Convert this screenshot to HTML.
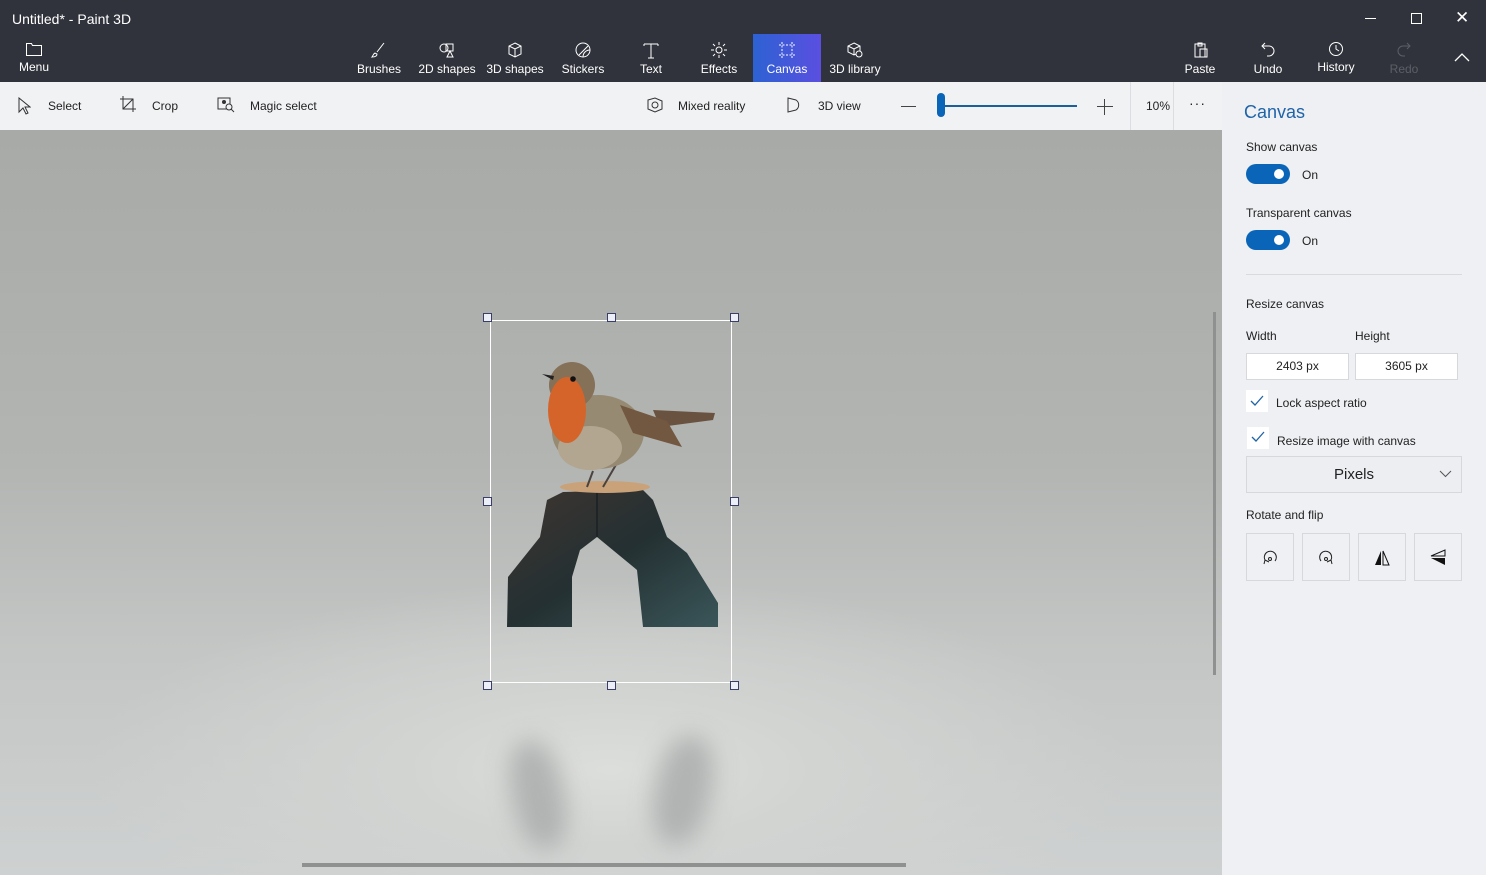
<!DOCTYPE html>
<html><head><meta charset="utf-8"><style>
*{margin:0;padding:0;box-sizing:border-box}
body{width:1486px;height:875px;overflow:hidden;font-family:"Liberation Sans",sans-serif;background:#2f323a;position:relative}
.abs{position:absolute}
.top{left:0;top:0;width:1486px;height:82px;background:#30333b;color:#fff}
.t{font-size:12px;color:#fff;white-space:nowrap}
.tb{position:absolute;top:34px;height:48px;text-align:center;color:#fff;font-size:12px}
.tb svg{position:absolute;left:50%;margin-left:-9px;top:7px}
.tb span{position:absolute;left:-10px;right:-10px;top:28px;text-align:center;white-space:nowrap}
.bar{left:0;top:82px;width:1222px;height:48px;background:#f1f2f4}
.bar .t{color:#222;font-size:12px}
.canvas{left:0;top:130px;width:1222px;height:745px;background:
radial-gradient(ellipse 520px 190px at 610px 640px,#dcdedb 0%,#d2d4d2 40%,rgba(200,202,201,0) 100%),
linear-gradient(180deg,#a8aaa8 0%,#b3b5b3 45%,#c4c6c5 70%,#ced1d1 100%)}
.panel{left:1222px;top:82px;width:264px;height:793px;background:#eef0f3}
.p{font-size:12px;color:#222;position:absolute;white-space:nowrap}
.tog{position:absolute;width:44px;height:20px;border-radius:10px;background:#0a64b8}
.tog:after{content:"";position:absolute;right:6px;top:5px;width:10px;height:10px;border-radius:50%;background:#fff}
.box{position:absolute;background:#fff;border:1px solid #d6d8dc;font-size:12px;color:#222;text-align:center}
.h{position:absolute;width:9px;height:9px;border:1px solid #3a3f6a;background:#eceef8}
</style></head><body>
<div class="abs top">
 <div class="abs t" style="left:12px;top:11px;font-size:14px">Untitled* - Paint 3D</div>
 <div class="abs" style="left:1365px;top:18px;width:11px;height:1px;background:#fff"></div>
 <div class="abs" style="left:1411px;top:13px;width:11px;height:11px;border:1px solid #fff"></div>
 <div class="abs t" style="left:1455px;top:8px;font-size:17px">✕</div>
 <div class="tb" style="left:12px;width:44px"><svg width="18" height="16" viewBox="0 0 18 16"><path d="M1.5 2.5h5l1 2h9v10h-15z" fill="none" stroke="#fff"/></svg><span style="top:26px">Menu</span></div>
 <div class="tb" style="left:353px;width:52px"><svg width="18" height="18" viewBox="0 0 18 18"><path d="M14 2l-7 9M5 12c-2 1-2 3-3 4 3 0 5-1 5-3z" fill="none" stroke="#fff"/></svg><span>Brushes</span></div>
 <div class="tb" style="left:418px;width:58px"><svg width="18" height="18" viewBox="0 0 18 18"><circle cx="6" cy="7" r="4" fill="none" stroke="#fff"/><path d="M8 3h7v7h-7zM9 16l3-6 3 6z" fill="none" stroke="#fff"/></svg><span>2D shapes</span></div>
 <div class="tb" style="left:486px;width:58px"><svg width="18" height="18" viewBox="0 0 18 18"><path d="M9 2l6 3v8l-6 3-6-3V5zM3 5l6 3 6-3M9 8v8" fill="none" stroke="#fff"/></svg><span>3D shapes</span></div>
 <div class="tb" style="left:558px;width:50px"><svg width="18" height="18" viewBox="0 0 18 18"><circle cx="9" cy="9" r="7" fill="none" stroke="#fff"/><path d="M5 14l9-9M9 16c0-4 3-7 7-7" fill="none" stroke="#fff"/></svg><span>Stickers</span></div>
 <div class="tb" style="left:630px;width:42px"><svg width="18" height="18" viewBox="0 0 18 18"><path d="M2 3h14M9 3v14M2 3v2M16 3v2M6 17h6" fill="none" stroke="#fff"/></svg><span>Text</span></div>
 <div class="tb" style="left:697px;width:44px"><svg width="18" height="18" viewBox="0 0 18 18"><circle cx="9" cy="9" r="3" fill="none" stroke="#fff"/><path d="M9 1v3M9 14v3M1 9h3M14 9h3M3 3l2 2M13 13l2 2M3 15l2-2M13 5l2-2" stroke="#fff"/></svg><span>Effects</span></div>
 <div class="tb" style="left:753px;width:68px;background:linear-gradient(90deg,#2d62d3,#5a4fe0)"><svg width="18" height="18" viewBox="0 0 18 18"><path d="M4 1v16M14 1v16M1 4h16M1 14h16" stroke="#fff" stroke-dasharray="2 1.5"/></svg><span>Canvas</span></div>
 <div class="tb" style="left:827px;width:56px"><svg width="18" height="18" viewBox="0 0 18 18"><path d="M8 2l6 3v6l-6 3-6-3V5zM2 5l6 3 6-3M8 8v6" fill="none" stroke="#fff"/><circle cx="13" cy="13" r="3" fill="#30333b" stroke="#fff"/></svg><span>3D library</span></div>
 <div class="tb" style="left:1180px;width:40px"><svg width="18" height="18" viewBox="0 0 18 18"><path d="M4 3h10v13H4zM7 2h4v3H7zM9 8h7v8H9z" fill="none" stroke="#fff"/></svg><span>Paste</span></div>
 <div class="tb" style="left:1248px;width:40px"><svg width="18" height="18" viewBox="0 0 18 18"><path d="M6 2L3 5l3 3M3 5h7a5 5 0 010 10H8" fill="none" stroke="#fff"/></svg><span>Undo</span></div>
 <div class="tb" style="left:1312px;width:48px"><svg width="18" height="18" viewBox="0 0 18 18" style="top:6px"><circle cx="9" cy="9" r="6.5" fill="none" stroke="#fff"/><path d="M9 5v4l3 2" fill="none" stroke="#fff"/></svg><span style="top:26px">History</span></div>
 <div class="tb" style="left:1384px;width:40px;color:#5c5f66"><svg width="18" height="18" viewBox="0 0 18 18"><path d="M12 2l3 3-3 3M15 5H8a5 5 0 000 10h2" fill="none" stroke="#5c5f66"/></svg><span>Redo</span></div>
 <svg class="abs" style="left:1454px;top:52px" width="16" height="10"><path d="M1 9l7-7 7 7" fill="none" stroke="#fff" stroke-width="1.3"/></svg>
</div>
<div class="abs bar">
 <svg class="abs" style="left:17px;top:15px" width="14" height="18"><path d="M2 1v14l4-4 3 6 2-1-3-6h5z" fill="none" stroke="#333"/></svg>
 <div class="abs t" style="left:48px;top:17px">Select</div>
 <svg class="abs" style="left:119px;top:13px" width="18" height="18"><path d="M4 1v13h13M1 4h13v13M14 4L4 14" fill="none" stroke="#333"/></svg>
 <div class="abs t" style="left:152px;top:17px">Crop</div>
 <svg class="abs" style="left:217px;top:15px" width="18" height="16"><rect x="1" y="1" width="12" height="11" fill="none" stroke="#333"/><circle cx="7" cy="5" r="2" fill="#333"/><circle cx="12" cy="10" r="3" fill="#f1f2f4" stroke="#333"/><path d="M14 12l3 3" stroke="#333"/></svg>
 <div class="abs t" style="left:250px;top:17px">Magic select</div>
 <svg class="abs" style="left:646px;top:14px" width="18" height="18"><path d="M2 4l7-2 7 3v8l-7 3-7-3z" fill="none" stroke="#333"/><circle cx="9" cy="9" r="3" fill="none" stroke="#333"/></svg>
 <div class="abs t" style="left:678px;top:17px">Mixed reality</div>
 <svg class="abs" style="left:786px;top:14px" width="18" height="18"><path d="M2 2l8 2a6 6 0 010 10l-8 2z" fill="none" stroke="#333"/></svg>
 <div class="abs t" style="left:818px;top:17px">3D view</div>
 <div class="abs" style="left:901px;top:24px;width:15px;height:1px;background:#444"></div>
 <div class="abs" style="left:940px;top:23px;width:137px;height:2px;background:#1d5f9a"></div>
 <div class="abs" style="left:937px;top:11px;width:8px;height:24px;border-radius:4px;background:#0a64b8"></div>
 <div class="abs" style="left:1097px;top:24px;width:16px;height:1px;background:#444"></div>
 <div class="abs" style="left:1104px;top:17px;width:1px;height:16px;background:#444"></div>
 <div class="abs" style="left:1130px;top:0;width:44px;height:48px;border-left:1px solid #dcdde0;border-right:1px solid #dcdde0"></div>
 <div class="abs t" style="left:1146px;top:17px">10%</div>
 <div class="abs t" style="left:1189px;top:13px;font-size:14px;letter-spacing:1px">···</div>
</div>
<div class="abs canvas">
 <div class="abs" style="left:512px;top:610px;width:52px;height:110px;border-radius:45%;background:#a4a7a6;filter:blur(12px);opacity:.75;transform:rotate(-12deg)"></div>
 <div class="abs" style="left:655px;top:605px;width:56px;height:110px;border-radius:45%;background:#a4a7a6;filter:blur(12px);opacity:.75;transform:rotate(12deg)"></div>
 <div class="abs" style="left:302px;top:733px;width:604px;height:4px;background:#8f9090"></div>
 <div class="abs" style="left:1213px;top:182px;width:3px;height:363px;background:#8f9090"></div>
</div>
<svg class="abs" style="left:0;top:0" width="1222" height="875">
 <defs><linearGradient id="rk" x1="0" y1="0" x2="1" y2="1"><stop offset="0" stop-color="#3f3530"/><stop offset=".5" stop-color="#243032"/><stop offset="1" stop-color="#3a5659"/></linearGradient></defs>
 <rect x="490.5" y="320.5" width="241" height="362" fill="none" stroke="#fff"/>
 <path d="M507 627L508 577 540 537 547 500 563 492 643 490 653 500 667 537 687 553 718 603 718 627 643 627 637 570 597 537 580 550 572 577 572 627z" fill="url(#rk)"/>
 <path d="M597 492 L597 537" stroke="#1f2526" stroke-width="2"/>
 <ellipse cx="605" cy="487" rx="45" ry="6" fill="#c9a27a"/>
 <path d="M593 471l-6 16M617 463l-14 24" stroke="#4a4340" stroke-width="2"/>
 <path d="M653 410L715 413 713 420 660 427z" fill="#6a5240"/>
 <ellipse cx="598" cy="432" rx="46" ry="37" fill="#978a72"/>
 <ellipse cx="590" cy="448" rx="32" ry="22" fill="#b2a690"/>
 <circle cx="572" cy="385" r="23" fill="#857058"/>
 <ellipse cx="567" cy="410" rx="19" ry="33" fill="#d4642a"/>
 <path d="M620 405L667 421 682 447 633 433z" fill="#735841"/>
 <path d="M542 374l12 2-1 4z" fill="#222"/>
 <circle cx="573" cy="379" r="2.8" fill="#111"/>
</svg>
<div class="h" style="left:483px;top:313px"></div><div class="h" style="left:607px;top:313px"></div><div class="h" style="left:730px;top:313px"></div>
<div class="h" style="left:483px;top:497px"></div><div class="h" style="left:730px;top:497px"></div>
<div class="h" style="left:483px;top:681px"></div><div class="h" style="left:607px;top:681px"></div><div class="h" style="left:730px;top:681px"></div>
<div class="abs panel">
 <div class="p" style="left:22px;top:20px;font-size:18px;color:#1f63a8">Canvas</div>
 <div class="p" style="left:24px;top:58px">Show canvas</div>
 <div class="tog" style="left:24px;top:82px"></div><div class="p" style="left:80px;top:86px">On</div>
 <div class="p" style="left:24px;top:124px">Transparent canvas</div>
 <div class="tog" style="left:24px;top:148px"></div><div class="p" style="left:80px;top:152px">On</div>
 <div class="abs" style="left:24px;top:192px;width:216px;height:1px;background:#d8dadd"></div>
 <div class="p" style="left:24px;top:215px">Resize canvas</div>
 <div class="p" style="left:24px;top:247px">Width</div><div class="p" style="left:133px;top:247px">Height</div>
 <div class="box" style="left:24px;top:271px;width:103px;height:27px;line-height:25px">2403 px</div>
 <div class="box" style="left:133px;top:271px;width:103px;height:27px;line-height:25px">3605 px</div>
 <div class="abs" style="left:24px;top:308px;width:22px;height:22px;background:#fff"></div>
 <svg class="abs" style="left:28px;top:313px" width="14" height="12"><path d="M1 6l4 4 8-9" fill="none" stroke="#1f63a8" stroke-width="1.3"/></svg>
 <div class="p" style="left:54px;top:314px">Lock aspect ratio</div>
 <div class="abs" style="left:25px;top:345px;width:22px;height:22px;background:#fff"></div>
 <svg class="abs" style="left:29px;top:349px" width="14" height="12"><path d="M1 6l4 4 8-9" fill="none" stroke="#1f63a8" stroke-width="1.3"/></svg>
 <div class="p" style="left:55px;top:352px">Resize image with canvas</div>
 <div class="box" style="left:24px;top:374px;width:216px;height:37px;line-height:36px;background:#eceef1;font-size:15px">Pixels</div>
 <svg class="abs" style="left:217px;top:388px" width="13" height="8"><path d="M1 1l5.5 5.5L12 1" fill="none" stroke="#555"/></svg>
 <div class="p" style="left:24px;top:426px">Rotate and flip</div>
 <div class="box" style="left:24px;top:451px;width:48px;height:48px;background:#eef0f3"></div>
 <div class="box" style="left:80px;top:451px;width:48px;height:48px;background:#eef0f3"></div>
 <div class="box" style="left:136px;top:451px;width:48px;height:48px;background:#eef0f3"></div>
 <div class="box" style="left:192px;top:451px;width:48px;height:48px;background:#eef0f3"></div>
 <svg class="abs" style="left:39px;top:467px" width="18" height="18"><path d="M4 11a6 6 0 1110 1M4 11l-1 4M4 11l4 2" fill="none" stroke="#222"/><circle cx="9" cy="10" r="1.5" fill="none" stroke="#222"/></svg>
 <svg class="abs" style="left:95px;top:467px" width="18" height="18"><path d="M14 11a6 6 0 10-10 1M14 11l1 4M14 11l-4 2" fill="none" stroke="#222"/><circle cx="9" cy="10" r="1.5" fill="none" stroke="#222"/></svg>
 <svg class="abs" style="left:151px;top:467px" width="18" height="18"><path d="M8 2v14H2z" fill="#111"/><path d="M10 2v14h6z" fill="none" stroke="#111"/></svg>
 <svg class="abs" style="left:207px;top:467px" width="18" height="18"><path d="M2 9h14v7z" fill="#111"/><path d="M2 7h14V1z" fill="none" stroke="#111"/></svg>
</div>
</body></html>
